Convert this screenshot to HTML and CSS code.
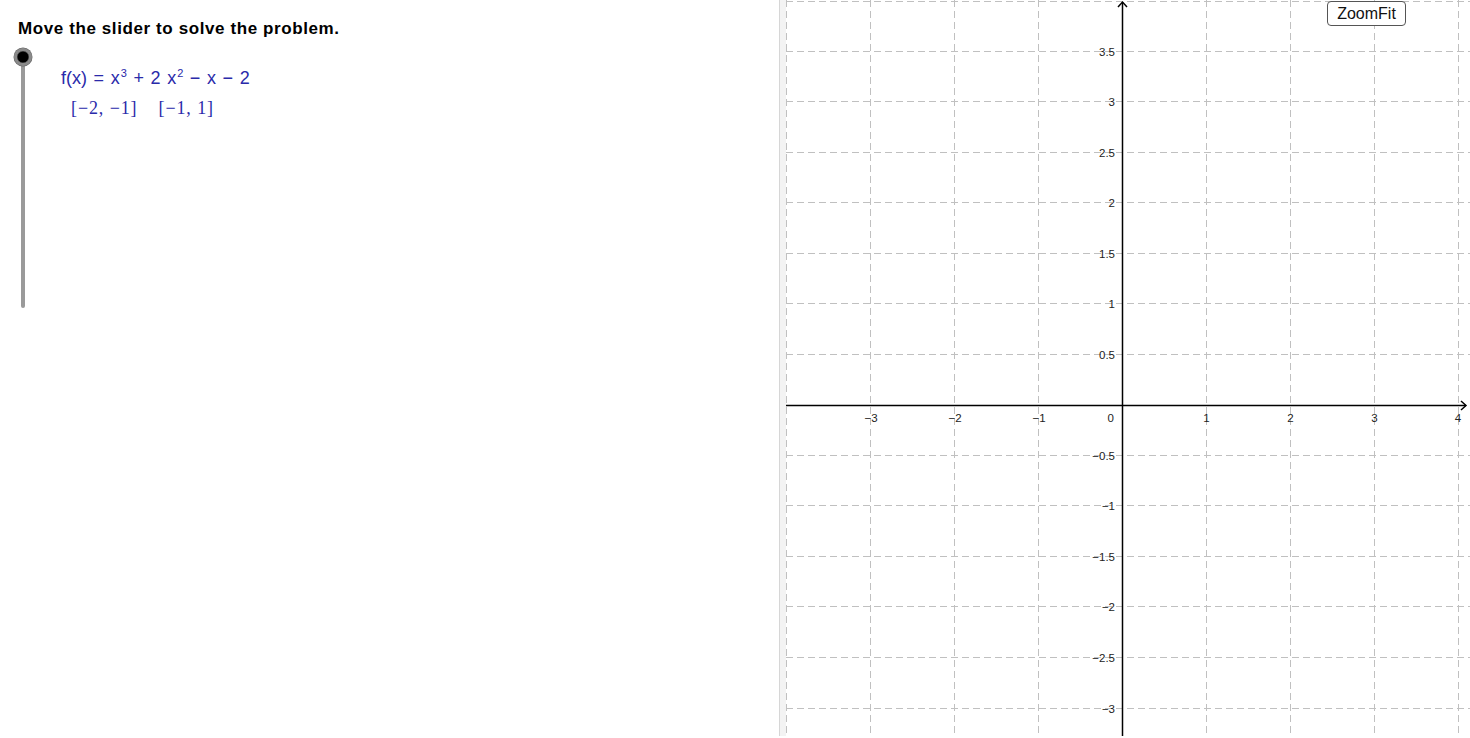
FILE: index.html
```html
<!DOCTYPE html>
<html lang="en">
<head>
<meta charset="utf-8">
<title>Move the slider</title>
<link rel="stylesheet" href="styles.css">
</head>
<body>
<div class="app">
  <section class="algebra">
    <h1 class="title">Move the slider to solve the problem.</h1>
    <div class="content">
      <div class="slider">
        <div class="track"></div>
        <span class="knob"></span>
      </div>
      <div class="math">
        <div class="fx">f(x) = x<sup>3</sup> + 2 x<sup>2</sup> − x − 2</div>
        <div class="intervals"><span>[−2, −1]</span><span>[−1, 1]</span></div>
      </div>
    </div>
  </section>
  <div class="divider"></div>
  <section class="graphics">
    <svg class="plot" width="684" height="736" viewBox="0 0 684 736">
      <g class="grid">
        <line x1="0.5" y1="0" x2="0.5" y2="736"/>
        <line x1="84.5" y1="0" x2="84.5" y2="736"/>
        <line x1="168.5" y1="0" x2="168.5" y2="736"/>
        <line x1="252.5" y1="0" x2="252.5" y2="736"/>
        <line x1="420.5" y1="0" x2="420.5" y2="736"/>
        <line x1="504.5" y1="0" x2="504.5" y2="736"/>
        <line x1="588.5" y1="0" x2="588.5" y2="736"/>
        <line x1="672.5" y1="0" x2="672.5" y2="736"/>
        <line x1="0" y1="1.5" x2="684" y2="1.5"/>
        <line x1="0" y1="51.5" x2="684" y2="51.5"/>
        <line x1="0" y1="101.5" x2="684" y2="101.5"/>
        <line x1="0" y1="152.5" x2="684" y2="152.5"/>
        <line x1="0" y1="202.5" x2="684" y2="202.5"/>
        <line x1="0" y1="253.5" x2="684" y2="253.5"/>
        <line x1="0" y1="303.5" x2="684" y2="303.5"/>
        <line x1="0" y1="354.5" x2="684" y2="354.5"/>
        <line x1="0" y1="455.5" x2="684" y2="455.5"/>
        <line x1="0" y1="505.5" x2="684" y2="505.5"/>
        <line x1="0" y1="556.5" x2="684" y2="556.5"/>
        <line x1="0" y1="606.5" x2="684" y2="606.5"/>
        <line x1="0" y1="657.5" x2="684" y2="657.5"/>
        <line x1="0" y1="708.5" x2="684" y2="708.5"/>
      </g>
      <g class="axes">
        <line x1="0" y1="405.5" x2="680" y2="405.5"/>
        <line x1="336.5" y1="2" x2="336.5" y2="736"/>
        <polyline points="675,401 680,405.5 675,410"/>
        <polyline points="332,7 336.5,2 341,7"/>
      </g>
      <g class="ylabels">
        <text x="329" y="55.5">3.5</text>
        <text x="329" y="105.5">3</text>
        <text x="329" y="156.5">2.5</text>
        <text x="329" y="207">2</text>
        <text x="329" y="257.5">1.5</text>
        <text x="329" y="307.5">1</text>
        <text x="329" y="358.5">0.5</text>
        <text x="328" y="421.5">0</text>
        <text x="329" y="459.5">−0.5</text>
        <text x="329" y="510">−1</text>
        <text x="329" y="560.5">−1.5</text>
        <text x="329" y="611">−2</text>
        <text x="329" y="661.5">−2.5</text>
        <text x="329" y="712.5">−3</text>
      </g>
      <g class="xlabels">
        <text x="85" y="421.5">−3</text>
        <text x="169" y="421.5">−2</text>
        <text x="253" y="421.5">−1</text>
        <text x="420.5" y="421.5">1</text>
        <text x="504.5" y="421.5">2</text>
        <text x="588.5" y="421.5">3</text>
        <text x="672" y="421.5">4</text>
      </g>
    </svg>
    <button class="zoomfit" type="button">ZoomFit</button>
  </section>
</div>
</body>
</html>
```
FILE: styles.css
```css
html, body {
  margin: 0;
  padding: 0;
  background: #ffffff;
}

.app {
  display: flex;
  height: 736px;
  width: 1470px;
}

.algebra {
  width: 779px;
  flex: none;
  padding: 19px 0 0 0;
  box-sizing: border-box;
}

.title {
  margin: 0 0 9px 18px;
  font-family: "Liberation Sans", Arial, sans-serif;
  font-weight: bold;
  font-size: 17px;
  line-height: 20px;
  letter-spacing: 0.6px;
  color: #000;
}

.content {
  display: flex;
  padding-left: 13.7px;
}

.slider {
  position: relative;
  width: 18px;
  height: 269px;
  flex: none;
}

.track {
  margin: 9px 0 0 7px;
  width: 4px;
  height: 251px;
  border-radius: 2px;
  background: #9a9a9a;
}

.knob {
  position: absolute;
  left: 0;
  top: 0;
  width: 18px;
  height: 18px;
  box-sizing: border-box;
  border-radius: 50%;
  background: #000;
  border: 3.5px solid #8a8a8a;
  box-shadow: inset 0 0 0 0.5px #555, 0 0 0 0.5px #666;
}

.math {
  margin-left: 29.3px;
  padding-top: 20px;
  color: #2a2aaa;
}

.fx {
  font-family: "Liberation Sans", Arial, sans-serif;
  font-size: 18px;
  line-height: 21px;
  word-spacing: 1.6px;
  white-space: nowrap;
}

.fx sup {
  font-size: 11px;
  line-height: 0;
  vertical-align: 7px;
  margin-left: 1px;
}

.intervals {
  display: flex;
  gap: 21px;
  margin-top: 9px;
  padding-left: 10px;
  font-family: "Liberation Serif", "Times New Roman", serif;
  font-size: 18px;
  line-height: 21px;
  letter-spacing: 0.9px;
  white-space: nowrap;
}

.divider {
  width: 7px;
  flex: none;
  box-sizing: border-box;
  border-left: 1px solid #d6d6d6;
  background: #f3f3f3;
}

.graphics {
  position: relative;
  width: 684px;
  flex: none;
  overflow: hidden;
}

.plot {
  display: block;
}

.grid line {
  stroke: #c0c0c0;
  stroke-width: 1;
  stroke-dasharray: 7 4;
}

.axes line,
.axes polyline {
  stroke: #000;
  stroke-width: 1.5;
  fill: none;
}

.ylabels text,
.xlabels text {
  font-family: "Liberation Sans", Arial, sans-serif;
  font-size: 11.5px;
  fill: #222;
}

.ylabels text {
  text-anchor: end;
}

.xlabels text {
  text-anchor: middle;
}

.zoomfit {
  position: absolute;
  left: 541px;
  top: 1px;
  width: 79px;
  height: 25px;
  box-sizing: border-box;
  padding: 0;
  border: 1.5px solid #555;
  border-radius: 4px;
  background: #fff;
  font-family: "Liberation Sans", Arial, sans-serif;
  font-size: 16px;
  line-height: 20px;
  color: #111;
}
```
